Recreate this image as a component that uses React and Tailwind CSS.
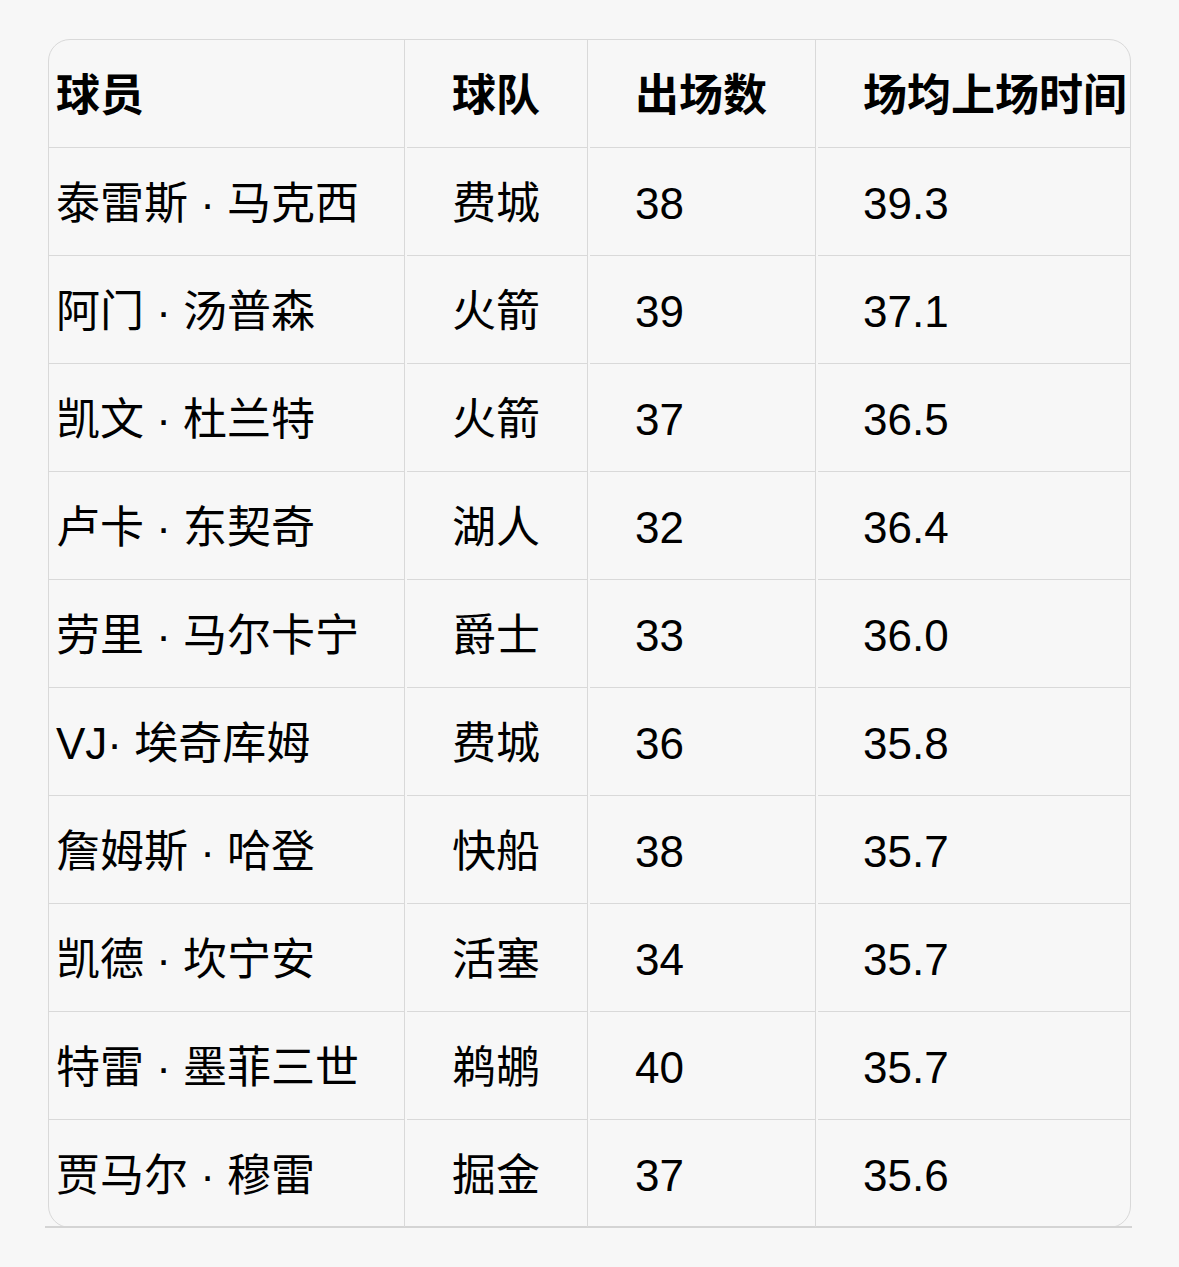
const HEAD = ['球员', '球队', '出场数', '场均上场时间'];

const ROWS = [
  ['泰雷斯 · 马克西', '费城', '38', '39.3'],
  ['阿门 · 汤普森', '火箭', '39', '37.1'],
  ['凯文 · 杜兰特', '火箭', '37', '36.5'],
  ['卢卡 · 东契奇', '湖人', '32', '36.4'],
  ['劳里 · 马尔卡宁', '爵士', '33', '36.0'],
  ['VJ· 埃奇库姆', '费城', '36', '35.8'],
  ['詹姆斯 · 哈登', '快船', '38', '35.7'],
  ['凯德 · 坎宁安', '活塞', '34', '35.7'],
  ['特雷 · 墨菲三世', '鹈鹕', '40', '35.7'],
  ['贾马尔 · 穆雷', '掘金', '37', '35.6'],
];

function Cell({ children, col, last, head }) {
  return (
    <div className={col === 0 ? 'flex flex-col' : 'flex flex-col border-l border-[#d9d9d9]'}>
      <div
        className={
          'flex h-[107px] items-center whitespace-nowrap pt-[5px] ' +
          (col === 0 ? 'pl-[7px] ' : 'pl-[47px] ') +
          (head ? 'font-semibold' : 'font-normal')
        }
      >
        {children}
      </div>
      {!last && <div className={col === 0 ? 'h-px bg-[#d9d9d9]' : 'ml-[2px] h-px bg-[#d9d9d9]'} />}
    </div>
  );
}

export default function App() {
  return (
    <div
      className="min-h-[1267px] bg-[#f7f7f7] pt-[39px] text-[44px] leading-none text-black"
      style={{ fontFamily: '"Liberation Sans", "Noto Sans CJK SC", sans-serif' }}
    >
      <div className="ml-[45px] w-[1087px]">
        <div className="ml-[3px] w-[1083px] overflow-hidden rounded-[22px] border border-[#d9d9d9]">
          <div className="grid grid-cols-[355px_183px_228px_1fr]">
            {HEAD.map((h, i) => (
              <Cell key={h} col={i} head>
                {h}
              </Cell>
            ))}
            {ROWS.map((row, r) =>
              row.map((v, i) => (
                <Cell key={r + '-' + i} col={i} last={r === ROWS.length - 1}>
                  {v}
                </Cell>
              ))
            )}
          </div>
        </div>
        {/* bottom rule sits over the rounded border */}
        <div className="-mt-[2px] h-[2px] bg-[#d4d4d4]" />
      </div>
    </div>
  );
}
